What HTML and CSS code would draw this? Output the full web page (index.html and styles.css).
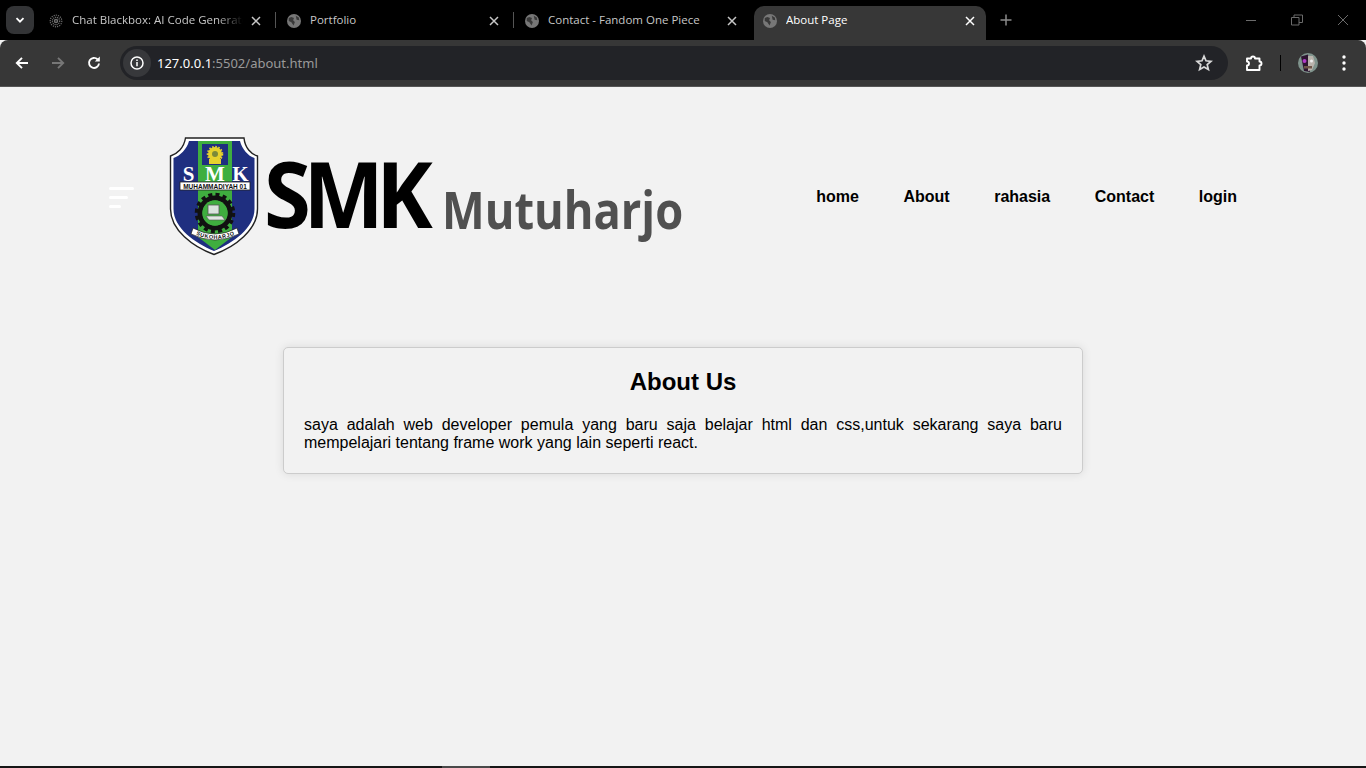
FILE: index.html
```html
<!DOCTYPE html>
<html lang="en">
<head>
<meta charset="utf-8">
<title>About Page</title>
<link rel="stylesheet" href="styles.css">
</head>
<body>
<div class="browser">
  <div class="tabstrip">
    <button class="tab-search"><svg width="12" height="12" viewBox="0 0 12 12"><path d="M2.5 4.2 6 7.7l3.5-3.5" fill="none" stroke="#fff" stroke-width="1.8"/></svg></button>
    <div class="tab">
      <svg class="fav" width="14" height="14" viewBox="0 0 14 14"><g fill="none" stroke="#6d6d6d"><circle cx="7" cy="7" r="1.5" stroke-width="1.500"/><circle cx="7" cy="7" r="3.700" stroke-width="1.200" stroke-dasharray="1.200 .8"/><circle cx="7" cy="7" r="5.800" stroke-width="1.200" stroke-dasharray="1.200 1"/></g></svg>
      <span class="tab-title fade">Chat Blackbox: AI Code Generator</span>
      <svg class="close" width="10" height="10" viewBox="0 0 10 10"><path d="M1 1l8 8M9 1l-8 8" stroke="#c7c7c7" stroke-width="1.5"/></svg>
      <i class="sep"></i>
    </div>
    <div class="tab">
      <svg class="fav" width="14" height="14" viewBox="0 0 16 16"><use href="#globe"/></svg>
      <span class="tab-title">Portfolio</span>
      <svg class="close" width="10" height="10" viewBox="0 0 10 10"><path d="M1 1l8 8M9 1l-8 8" stroke="#c7c7c7" stroke-width="1.5"/></svg>
      <i class="sep"></i>
    </div>
    <div class="tab">
      <svg class="fav" width="14" height="14" viewBox="0 0 16 16"><use href="#globe"/></svg>
      <span class="tab-title">Contact - Fandom One Piece</span>
      <svg class="close" width="10" height="10" viewBox="0 0 10 10"><path d="M1 1l8 8M9 1l-8 8" stroke="#c7c7c7" stroke-width="1.5"/></svg>
    </div>
    <div class="tab active">
      <svg class="fav" width="14" height="14" viewBox="0 0 16 16"><use href="#globe"/></svg>
      <span class="tab-title">About Page</span>
      <svg class="close" width="10" height="10" viewBox="0 0 10 10"><path d="M1 1l8 8M9 1l-8 8" stroke="#fff" stroke-width="1.5"/></svg>
    </div>
    <svg class="newtab" width="12" height="12" viewBox="0 0 12 12"><path d="M6 .5v11M.5 6h11" stroke="#8a8a8a" stroke-width="1.5"/></svg>
    <div class="winctl">
      <svg width="12" height="12" viewBox="0 0 12 12"><path d="M1 6.5h10" stroke="#6b6b6b"/></svg>
      <svg width="12" height="12" viewBox="0 0 12 12"><path d="M.5 3.5h7.5v7.5H.5zM3 3.5V1h8.500v7.500H8" fill="none" stroke="#6b6b6b"/></svg>
      <svg width="12" height="12" viewBox="0 0 12 12"><path d="M1 1l10 10M11 1 1 11" stroke="#6b6b6b"/></svg>
    </div>
  </div>
  <div class="toolbar">
    <svg class="nav-ico" width="16" height="16" viewBox="0 0 16 16"><path d="M14 8H3M8 2.800 2.800 8 8 13.200" fill="none" stroke="#fff" stroke-width="1.900"/></svg>
    <svg class="nav-ico" width="16" height="16" viewBox="0 0 16 16"><path d="M2 8h11M8 2.800 13.200 8 8 13.200" fill="none" stroke="#777" stroke-width="1.900"/></svg>
    <svg class="nav-ico" width="16" height="16" viewBox="0 0 16 16"><path d="M13 8.500a5 5 0 1 1-1.500-4.200" fill="none" stroke="#fff" stroke-width="1.900"/><path d="M13.800 1.500v5h-5z" fill="#fff"/></svg>
    <div class="omnibox">
      <span class="site-info"><svg width="16" height="16" viewBox="0 0 16 16"><circle cx="8" cy="8" r="6" fill="none" stroke="#fff" stroke-width="1.500"/><path d="M8 7v4.200M8 4.500v1.400" stroke="#fff" stroke-width="1.500"/></svg></span>
      <span class="url"><b>127.0.0.1</b>:5502/about.html</span>
      <svg class="star" width="18" height="18" viewBox="0 0 18 18"><path d="M9 2.200l2 4.600 5 .5-3.800 3.300 1.200 4.900L9 12.900l-4.400 2.600 1.200-4.900L2 7.300l5-.5z" fill="none" stroke="#d8d8d8" stroke-width="1.700"/></svg>
    </div>
    <svg class="ext" width="18" height="18" viewBox="0 0 18 18"><path d="M2 4.500H6a2 2 0 0 1 4 0h4.500v3a2 2 0 0 1 0 4v4.500H2v-4.500a2 2 0 0 0 0-4z" fill="none" stroke="#fff" stroke-width="1.900" stroke-linejoin="round"/></svg>
    <i class="tool-sep"></i>
    <svg class="avatar" width="20" height="20" viewBox="0 0 20 20"><circle cx="10" cy="10" r="10" fill="#7f938c"/><path d="M3 3.500 10 1.500 12 19 6 18z" fill="#2d1530"/><path d="M10 3h5l2 7-3 7-4 1z" fill="#b9b3ac"/><circle cx="6.500" cy="8" r="2" fill="#b13cc8"/><circle cx="13.500" cy="8" r="1.500" fill="#efefef"/><path d="M6 13h8v2.500H6z" fill="#6e5648"/></svg>
    <svg class="menu" width="4" height="16" viewBox="0 0 4 16"><circle cx="2" cy="2" r="1.700" fill="#fff"/><circle cx="2" cy="8" r="1.700" fill="#fff"/><circle cx="2" cy="14" r="1.700" fill="#fff"/></svg>
  </div>
  <div class="toolbar-edge"></div>
</div>

<main class="page">
  <header class="site-header">
    <div class="hamburger"><i class="b1"></i><i class="b2"></i><i class="b3"></i></div>
    <div class="logo">
      <svg class="crest" width="90" height="119" viewBox="0 0 90 119">
        <defs><path id="crest-arc" d="M24 96 Q46 108 69 96"/></defs>
        <path d="M1.500 19 C8 17 15 11 16.500 1 H75 C76 11 82 17 88.500 19 V72 C88.500 93 66 110 45 117.500 C24 110 1.500 93 1.500 72Z" fill="#fff" stroke="#222" stroke-width="1.400"/>
        <path d="M4.500 21 C11 19 18 12 20 4 H71 C73 12 79 19 85.500 21 V72 C85.500 91 64 106 45 114 C26 106 4.500 91 4.500 72Z" fill="#1f2f80"/>
        <path d="M29 4 H63 V100 L46 113 29 100Z" fill="#3fae3f"/>
        <rect x="33" y="7" width="26" height="21" fill="#1f2f80"/>
        <circle cx="46" cy="17" r="7" fill="#e6d22e" stroke="#e6d22e" stroke-width="2.500" stroke-dasharray="1.500 1.500"/>
        <circle cx="46" cy="17" r="3" fill="#7b8a3a"/>
        <rect x="40" y="22" width="12" height="5" fill="#e6d22e"/>
        <text class="crest-smk" x="19.500" y="44">S</text>
        <text class="crest-smk" x="46" y="44">M</text>
        <text class="crest-smk" x="71.500" y="44">K</text>
        <rect x="11" y="45" width="70" height="8" fill="#fff" stroke="#222" stroke-width=".8"/>
        <text class="crest-band" x="46" y="51.500">MUHAMMADIYAH 01</text>
        <circle cx="46" cy="76" r="15" fill="none" stroke="#111" stroke-width="5"/>
        <circle cx="46" cy="76" r="18.500" fill="none" stroke="#111" stroke-width="3.500" stroke-dasharray="4 3.260"/>
        <circle cx="46" cy="76" r="12.700" fill="#3fae3f"/>
        <rect x="39" y="68" width="11" height="9" fill="#d9e3dc" stroke="#555" stroke-width=".8"/>
        <path d="M37 79h16l3 4H40z" fill="#dfe7e0" stroke="#555" stroke-width=".6"/>
        <path d="M22 97 Q46 109 70 97 L68 91 Q46 103 24 91Z" fill="#fff" stroke="#222" stroke-width=".7"/>
        <text class="crest-arc-text"><textPath href="#crest-arc" startOffset="50%">SUKOHARJO</textPath></text>
      </svg>
      <div class="logo-text">
        <span class="logo-smk">SMK</span>
        <span class="logo-town">Mutuharjo</span>
      </div>
    </div>
    <nav class="site-nav">
      <a href="#">home</a>
      <a href="#">About</a>
      <a href="#">rahasia</a>
      <a href="#">Contact</a>
      <a href="#">login</a>
    </nav>
  </header>
  <section class="about-card">
    <h2>About Us</h2>
    <p>saya adalah web developer pemula yang baru saja belajar html dan css,untuk sekarang saya baru mempelajari tentang frame work yang lain seperti react.</p>
  </section>
</main>
<div class="taskbar"><i></i></div>

<svg class="defs" width="0" height="0"><defs><g id="globe"><circle cx="8" cy="8" r="8" fill="#777"/><path d="M2 4.500 5 3.500l3 1-1 2.500 2 2-1.500 4L5 9.500 2 8zM10 2l3.500 2 .5 3-3-.5z" fill="#111" fill-opacity=".6"/></g></defs></svg>
</body>
</html>
```
FILE: styles.css
```css
* { box-sizing: border-box; }
html, body { margin: 0; height: 100%; }
body { width: 1366px; height: 768px; overflow: hidden; background: #f2f2f2; display: flex; flex-direction: column; font-family: "Liberation Sans", Arial, sans-serif; color: #000; }

.browser { flex: none; font-family: "Open Sans", "Noto Sans", sans-serif; }
.tabstrip { height: 40px; background: #000; display: flex; align-items: flex-start; position: relative; padding-left: 6px; }
.tab-search { width: 28px; height: 28px; margin-top: 6px; margin-right: 4px; border: 0; border-radius: 8px; background: #333436; display: flex; align-items: center; justify-content: center; padding: 0; }
.tab { width: 238px; height: 34px; margin-top: 6px; display: flex; align-items: center; padding: 0 15px 4px 11px; position: relative; color: #c7c7c7; flex: none; }
.fav { flex: none; }
.tab-title { flex: 1; margin-left: 9px; font-size: 11.500px; line-height: 14px; margin-top: -2px; white-space: nowrap; overflow: hidden; }
.fade { -webkit-mask-image: linear-gradient(90deg, #000 85%, transparent 100%); mask-image: linear-gradient(90deg, #000 85%, transparent 100%); }
.close { flex: none; margin-left: 8px; }
.sep { position: absolute; right: 0; top: 6px; width: 1px; height: 16px; background: #555; }
.tab.active { width: 232px; margin-left: 2px; margin-right: 2px; height: 34px; background: #373737; color: #fff; border-radius: 10px 10px 0 0; padding-left: 9px; padding-right: 11px; }
.newtab { margin: 14px 0 0 12px; flex: none; }
.winctl { margin-left: auto; display: flex; gap: 34px; padding: 14px 17px 0 0; }

.toolbar { height: 46px; background: #373737; border-radius: 8px 8px 0 0; display: flex; align-items: center; padding-left: 14px; position: relative; }
.nav-ico { flex: none; margin-right: 20px; }
.omnibox { width: 1108px; height: 34px; margin-left: -2px; background: #222327; border-radius: 17px; display: flex; align-items: center; padding: 0 15px 0 3px; }
.site-info { width: 28px; height: 28px; border-radius: 50%; background: #37383b; display: flex; align-items: center; justify-content: center; flex: none; }
.url { margin-left: 6px; font-size: 13px; color: #9a9a9a; flex: 1; font-family: "Noto Sans", sans-serif; }
.url b { color: #fff; font-weight: 400; }
.star { flex: none; }
.ext { flex: none; margin-left: 17px; }
.tool-sep { width: 1px; height: 16px; background: #000; margin-left: 17px; flex: none; }
.avatar { flex: none; margin-left: 17px; }
.menu { flex: none; margin-left: 24px; }
.toolbar-edge { height: 1px; background: #555; }

.page { flex: 1; min-height: 0; }
.site-header { display: flex; align-items: center; height: 219px; padding: 0 129px 0 109px; }
.hamburger { width: 25px; display: flex; flex-direction: column; gap: 6px; margin-right: 35px; margin-top: 2px; }
.hamburger i { display: block; height: 3px; background: #fff; border-radius: 2px; }
.hamburger .b2 { width: 19px; }
.hamburger .b3 { width: 12px; }
.logo { display: flex; align-items: center; margin-top: -1px; }
.crest { flex: none; margin-right: 5px; }
.crest-smk { font: 700 21px "Liberation Serif", serif; fill: #fff; text-anchor: middle; }
.crest-band { font: 700 6.500px "Liberation Sans", sans-serif; fill: #111; text-anchor: middle; }
.crest-arc-text { font: 700 5.500px "Liberation Sans", sans-serif; fill: #111; text-anchor: middle; letter-spacing: .6px; }
.logo-text { display: flex; align-items: baseline; margin-top: -6px; }
.logo-smk { display: inline-block; font: 700 92px/1 "Open Sans", sans-serif; letter-spacing: -8px; color: #000; transform: scaleX(.925); transform-origin: 0 50%; }
.logo-town { display: inline-block; font: 700 52px/1 "Open Sans", sans-serif; color: #505050; margin-left: 3px; transform: translateY(1px) scaleX(.87); transform-origin: 0 50%; }
.site-nav { margin-left: auto; display: flex; gap: 44.500px; }
.site-nav a { font-size: 16px; font-weight: 700; color: #000; text-decoration: none; }

.about-card { width: 800px; margin: 41px auto 0; padding: 20px 20px 21px; background: #f2f2f2; border: 1px solid #ccc; border-radius: 5px; box-shadow: 0 0 10px rgba(0,0,0,.1); }
.about-card h2 { margin: 0 0 21px; font-size: 24px; line-height: 27px; text-align: center; }
.about-card p { margin: 0; font-size: 16px; line-height: 18px; text-align: justify; }

.taskbar { flex: none; height: 2px; background: #161616; padding-left: 442px; }
.taskbar i { display: block; width: 48px; height: 2px; background: #4a4a4a; }
.defs { position: absolute; }
```
